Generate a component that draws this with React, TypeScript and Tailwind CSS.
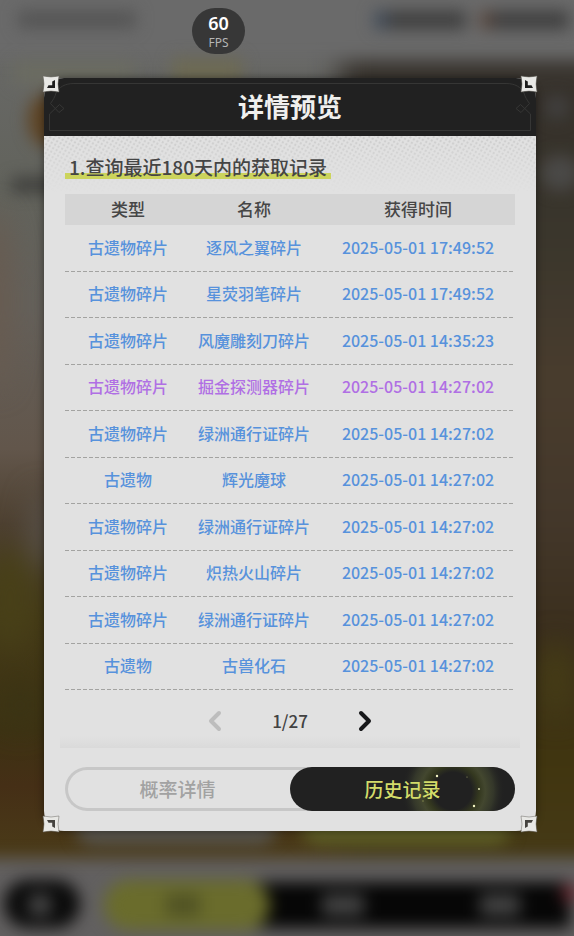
import React, { useState } from 'react';
import clsx from 'clsx';

interface RecordItem {
    type: string;
    name: string;
    time: string;
    rare?: boolean;
}

const RECORDS: RecordItem[] = [
    { type: "古遗物碎片", name: "逐风之翼碎片", time: "2025-05-01 17:49:52" },
    { type: "古遗物碎片", name: "星荧羽笔碎片", time: "2025-05-01 17:49:52" },
    { type: "古遗物碎片", name: "风魔雕刻刀碎片", time: "2025-05-01 14:35:23" },
    { type: "古遗物碎片", name: "掘金探测器碎片", time: "2025-05-01 14:27:02", rare: true },
    { type: "古遗物碎片", name: "绿洲通行证碎片", time: "2025-05-01 14:27:02" },
    { type: "古遗物", name: "辉光魔球", time: "2025-05-01 14:27:02" },
    { type: "古遗物碎片", name: "绿洲通行证碎片", time: "2025-05-01 14:27:02" },
    { type: "古遗物碎片", name: "炽热火山碎片", time: "2025-05-01 14:27:02" },
    { type: "古遗物碎片", name: "绿洲通行证碎片", time: "2025-05-01 14:27:02" },
    { type: "古遗物", name: "古兽化石", time: "2025-05-01 14:27:02" },
];

const TOTAL_PAGES = 27;

// Blurred game scene behind the dialog
function Scene() {
    return (
        <svg
            className="absolute inset-0 h-full w-full"
            viewBox="0 0 574 936"
            preserveAspectRatio="none"
            aria-hidden="true"
        >
            <defs>
                <linearGradient id="leftSide" x1="0" y1="0" x2="0" y2="1">
                    <stop offset="0" stopColor="#6a6a6a" />
                    <stop offset="0.2" stopColor="#62635c" />
                    <stop offset="0.33" stopColor="#64605a" />
                    <stop offset="0.48" stopColor="#62564b" />
                    <stop offset="0.56" stopColor="#4d4030" />
                    <stop offset="0.66" stopColor="#443a17" />
                    <stop offset="0.78" stopColor="#3d3213" />
                    <stop offset="0.84" stopColor="#452f16" />
                    <stop offset="0.91" stopColor="#4a3a18" />
                </linearGradient>
                <linearGradient id="rightSide" x1="0" y1="0" x2="0" y2="1">
                    <stop offset="0" stopColor="#6a6a6a" />
                    <stop offset="0.06" stopColor="#5c5b59" />
                    <stop offset="0.12" stopColor="#35302a" />
                    <stop offset="0.28" stopColor="#3a362c" />
                    <stop offset="0.42" stopColor="#493c2d" />
                    <stop offset="0.56" stopColor="#43372a" />
                    <stop offset="0.68" stopColor="#3a2e1c" />
                    <stop offset="0.8" stopColor="#40350f" />
                    <stop offset="0.91" stopColor="#463a17" />
                </linearGradient>
                <filter id="soft" x="-50%" y="-50%" width="200%" height="200%" colorInterpolationFilters="sRGB">
                    <feGaussianBlur stdDeviation="8" />
                </filter>
                <filter id="softer" x="-50%" y="-50%" width="200%" height="200%" colorInterpolationFilters="sRGB">
                    <feGaussianBlur stdDeviation="14" />
                </filter>
            </defs>
            <rect width="574" height="936" fill="url(#leftSide)" />
            <rect x="340" y="-40" width="300" height="1000" fill="url(#rightSide)" filter="url(#softer)" />
            <rect x="-40" y="-40" width="660" height="98" fill="#6a6a6a" filter="url(#soft)" />

            <g filter="url(#soft)">
                <rect x="18" y="11" width="118" height="17" fill="#545454" />
                <rect x="374" y="11" width="20" height="18" fill="#414c5a" />
                <rect x="388" y="11" width="78" height="18" fill="#3e3e3e" />
                <rect x="480" y="11" width="16" height="18" fill="#57453c" />
                <rect x="493" y="11" width="76" height="18" fill="#3e3e3e" />
                <rect x="14" y="62" width="120" height="22" fill="#6b6c61" />
                <rect x="172" y="58" width="70" height="30" fill="#6d6a54" />
                <ellipse cx="46" cy="120" rx="18" ry="26" fill="#5e4424" />
                <rect x="12" y="178" width="60" height="14" fill="#3c3c3a" />
                <circle cx="557" cy="107" r="12" fill="#424140" />
                <ellipse cx="560" cy="173" rx="20" ry="18" fill="#4a4947" />
            </g>
            <g filter="url(#softer)">
                <ellipse cx="-4" cy="300" rx="16" ry="90" fill="#685b50" />
                <ellipse cx="10" cy="600" rx="24" ry="50" fill="#484018" />
                <ellipse cx="42" cy="530" rx="12" ry="40" fill="#59534c" />
                <ellipse cx="556" cy="680" rx="18" ry="40" fill="#453c16" />
                <ellipse cx="20" cy="705" rx="24" ry="24" fill="#3b3414" />
            </g>

            <g filter="url(#soft)">
                <rect x="76" y="810" width="200" height="36" rx="17" fill="#56534b" />
                <rect x="302" y="810" width="208" height="36" rx="17" fill="#5c5c26" />
            </g>
            <rect x="-40" y="858" width="660" height="124" fill="#626060" filter="url(#soft)" />
            <g filter="url(#soft)">
                <rect x="4" y="880" width="76" height="48" rx="24" fill="#0a0a0a" />
                <rect x="240" y="882" width="330" height="46" fill="#060606" />
                <rect x="104" y="880" width="166" height="50" rx="25" fill="#6a6c2c" />
                <circle cx="40" cy="905" r="12" fill="#464646" />
                <rect x="166" y="894" width="34" height="22" fill="#505224" />
                <rect x="322" y="894" width="42" height="22" fill="#424242" />
                <rect x="480" y="894" width="40" height="22" fill="#424242" />
                <circle cx="570" cy="893" r="9" fill="#6b2830" />
            </g>
        </svg>
    );
}

// Corner stud, drawn for the top left and mirrored for the others
function Corner({ className, inner = "#1c1c1c" }: { className?: string; inner?: string }) {
    return (
        <svg className={clsx("absolute h-4 w-4 overflow-visible", className)} viewBox="0 0 16 16" aria-hidden="true">
            <path d="M0 0Q8 2 16 0Q14 8 16 16Q8 14 0 16Q2 8 0 0Z" fill="#e8e8e5" stroke="#6b6963" strokeWidth="0.5" />
            <path d="M12 4V12H4L5.5 9.2H9.2V5.5Z" fill={inner} />
        </svg>
    );
}

function FrameEnd({ className }: { className?: string }) {
    return (
        <svg
            className={clsx("h-12 w-8 shrink-0", className)}
            viewBox="0 0 32 48"
            fill="none"
            stroke="#363635"
            aria-hidden="true"
        >
            <path d="M32 0.5H26C17 0.5 11 4 8 10C7 14 5 17 2.5 20.5L11 29.5L16 25.5L11.5 21.5L1.5 31V47.5H32" />
        </svg>
    );
}

function DialogHeader() {
    return (
        <header className="relative flex h-[58px] items-center rounded-t-[20px] bg-[#212121] px-1">
            <FrameEnd />
            <div className="flex h-12 grow items-center justify-center border-y border-[#363635] pb-0.5">
                <h1 className="text-[26px] leading-8 font-bold text-[#f0f0ee]">详情预览</h1>
            </div>
            <FrameEnd className="-scale-x-100" />
        </header>
    );
}

function RecordTable({ records }: { records: RecordItem[] }) {
    return (
        <table className="mt-[14px] w-full table-fixed border-collapse text-center">
            <thead>
                <tr className="h-[31px] bg-[#d5d5d5] text-[17px] leading-6 text-[#464646]">
                    <th className="w-[28%] pb-0.5 font-medium">类型</th>
                    <th className="w-[28%] pb-0.5 font-medium">名称</th>
                    <th className="w-[44%] pb-0.5 pl-1 font-medium">获得时间</th>
                </tr>
            </thead>
            <tbody>
                {records.map((record, index) => (
                    <tr
                        key={index}
                        className={clsx(
                            "bg-[repeating-linear-gradient(90deg,#a3a3a1_0_4px,transparent_4px_6px)] bg-[length:100%_1px] bg-bottom bg-no-repeat text-base font-medium whitespace-nowrap odd:h-[47px] even:h-[46px]",
                            record.rare ? "text-[#b06fe4]" : "text-[#5792dc]"
                        )}
                    >
                        <td className="pb-1">{record.type}</td>
                        <td className="pb-1">{record.name}</td>
                        <td className="pb-1 pl-1">{record.time}</td>
                    </tr>
                ))}
            </tbody>
        </table>
    );
}

function Pager({ page, onChange }: { page: number; onChange: (page: number) => void }) {
    return (
        <nav className="flex h-[58px] items-center justify-center gap-[35px] pt-1" aria-label="分页">
            <button
                type="button"
                aria-label="上一页"
                disabled={page === 1}
                onClick={() => onChange(page - 1)}
                className="flex w-8 justify-center text-[#17181a] disabled:text-[#bdbdbd]"
            >
                <svg className="h-[22px] w-4" viewBox="0 0 16 22" fill="none" stroke="currentColor" strokeWidth="4" strokeLinecap="round" strokeLinejoin="round">
                    <path d="M12 3L4 11L12 19" />
                </svg>
            </button>
            <span className="w-12 text-center text-[17px] leading-6 font-medium text-[#424242]">
                {page}/{TOTAL_PAGES}
            </span>
            <button
                type="button"
                aria-label="下一页"
                disabled={page === TOTAL_PAGES}
                onClick={() => onChange(page + 1)}
                className="flex w-8 justify-center text-[#17181a] disabled:text-[#bdbdbd]"
            >
                <svg className="h-[22px] w-4" viewBox="0 0 16 22" fill="none" stroke="currentColor" strokeWidth="4" strokeLinecap="round" strokeLinejoin="round">
                    <path d="M4 3L12 11L4 19" />
                </svg>
            </button>
        </nav>
    );
}

// Eclipse glow on the right half of the selected tab
function Eclipse() {
    return (
        <svg className="absolute inset-y-0 right-0 h-full w-[120px]" viewBox="0 0 120 44" aria-hidden="true">
            <defs>
                <radialGradient id="halo" gradientUnits="userSpaceOnUse" cx="58" cy="24" r="52">
                    <stop offset="0.36" stopColor="#212121" />
                    <stop offset="0.5" stopColor="#34381f" />
                    <stop offset="0.62" stopColor="#43472f" />
                    <stop offset="0.78" stopColor="#34372a" />
                    <stop offset="1" stopColor="#212121" stopOpacity="0" />
                </radialGradient>
            </defs>
            <rect width="120" height="44" fill="url(#halo)" />
            <g fill="#f3f5c4">
                <circle cx="42" cy="9" r="1.2" />
                <circle cx="84" cy="22" r="0.9" />
                <circle cx="79" cy="39" r="1.2" />
                <circle cx="72" cy="10" r="0.6" fill="#9a9d62" />
                <circle cx="28" cy="34" r="0.8" fill="#85884e" />
            </g>
        </svg>
    );
}

// Halftone dots fading out below the header
function Halftone() {
    return (
        <svg className="pointer-events-none absolute inset-x-0 top-0 h-14 w-full [mask-image:linear-gradient(to_bottom,black,transparent)]" aria-hidden="true">
            <defs>
                <pattern id="dots" width="4" height="4" patternUnits="userSpaceOnUse" patternTransform="rotate(30)">
                    <circle cx="2" cy="2" r="1.2" fill="#cdcdcd" />
                </pattern>
            </defs>
            <rect width="100%" height="100%" fill="url(#dots)" />
        </svg>
    );
}

export default function App() {
    const [page, setPage] = useState(1);
    const [tab, setTab] = useState<'rates' | 'history'>('history');

    const tabs = [
        { id: 'rates' as const, label: "概率详情" },
        { id: 'history' as const, label: "历史记录" },
    ];

    return (
        <div className="relative min-h-screen overflow-hidden bg-[#4a4030] pt-[78px] pr-[38px] pb-24 pl-11 font-['Noto_Sans_CJK_SC','Noto_Sans',sans-serif]">
            <Scene />

            <div className="absolute top-2 left-48 flex h-[46px] w-[53px] flex-col items-center justify-center rounded-full bg-[#373737] font-['Noto_Sans',sans-serif]">
                <span className="text-lg leading-6 font-semibold text-white">60</span>
                <span className="text-xs leading-4 text-[#b5b5b5]">FPS</span>
            </div>

            <main className="relative rounded-[20px] bg-[#e1e1e1] shadow-[0_0_8px_rgba(0,0,0,0.45)]">
                <DialogHeader />

                <section className="relative px-[21px] pt-[18px]">
                    <Halftone />
                    <h2 className="relative inline-block bg-[linear-gradient(#ccd45c,#ccd45c)] bg-[length:100%_6px] bg-[position:0_19px] bg-no-repeat px-1 text-[19px] leading-[26px] font-medium text-[#454545]">
                        1.查询最近180天内的获取记录
                    </h2>
                    <RecordTable records={RECORDS} />
                </section>

                <Pager page={page} onChange={setPage} />

                <footer className="relative px-[21px] pt-[19px] pb-5">
                    <div className="absolute inset-x-4 -top-3 h-3 bg-linear-to-b from-transparent to-[#dadada]" />
                    <div role="tablist" className="flex h-11 rounded-full shadow-[inset_0_0_0_3px_#c7c7c7]">
                        {tabs.map(({ id, label }) => (
                            <button
                                key={id}
                                type="button"
                                role="tab"
                                aria-selected={tab === id}
                                onClick={() => setTab(id)}
                                className={clsx(
                                    "relative flex-1 overflow-hidden rounded-full text-[19px] leading-7 font-medium",
                                    tab === id ? "bg-[#212121] text-[#d3dc6a]" : "text-[#a2a2a2]"
                                )}
                            >
                                {tab === id && <Eclipse />}
                                <span className="relative">{label}</span>
                            </button>
                        ))}
                    </div>
                </footer>

                <Corner className="-top-0.5 -left-px" />
                <Corner className="-top-0.5 -right-px -scale-x-100" />
                <Corner className="-bottom-px -left-px -scale-y-100" inner="#45433f" />
                <Corner className="-right-px -bottom-px -scale-100" inner="#45433f" />
            </main>
        </div>
    );
}
